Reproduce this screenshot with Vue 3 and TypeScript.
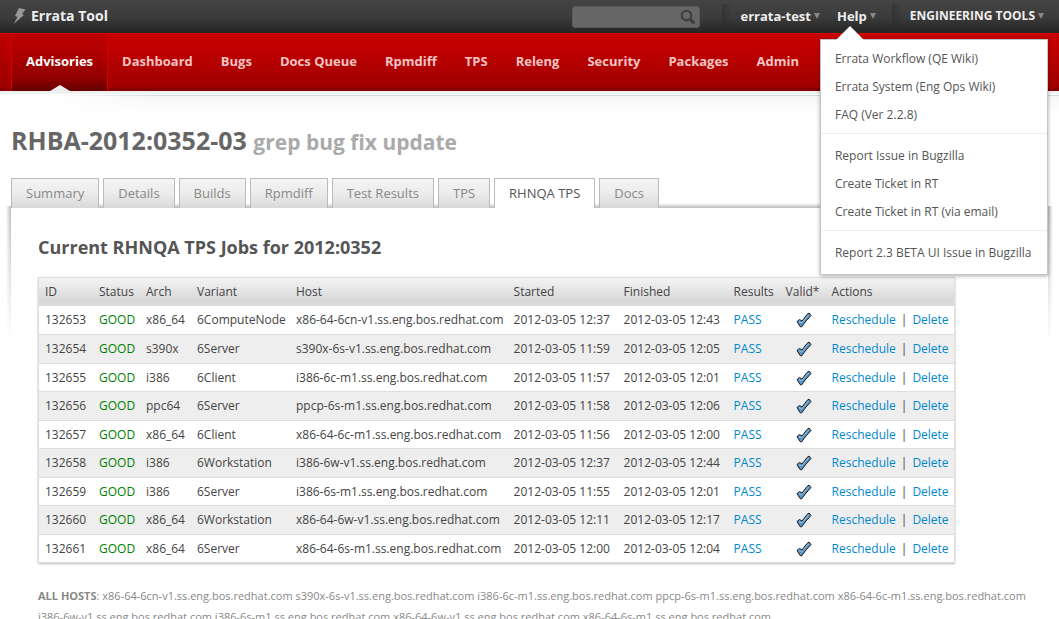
<script setup lang="ts">
import { ref } from 'vue'

interface Job {
  id: number
  arch: string
  variant: string
  host: string
  started: string
  finished: string
}

const navItems: string[] = ['Advisories', 'Dashboard', 'Bugs', 'Docs Queue', 'Rpmdiff', 'TPS', 'Releng', 'Security', 'Packages', 'Admin']
const tabs: string[] = ['Summary', 'Details', 'Builds', 'Rpmdiff', 'Test Results', 'TPS', 'RHNQA TPS', 'Docs']
const helpGroups: string[][] = [
  ['Errata Workflow (QE Wiki)', 'Errata System (Eng Ops Wiki)', 'FAQ (Ver 2.2.8)'],
  ['Report Issue in Bugzilla', 'Create Ticket in RT', 'Create Ticket in RT (via email)'],
  ['Report 2.3 BETA UI Issue in Bugzilla'],
]
const columns: string[] = ['ID', 'Status', 'Arch', 'Variant', 'Host', 'Started', 'Finished', 'Results', 'Valid*', 'Actions']

const domain = '.ss.eng.bos.redhat.com'
const day = '2012-03-05 '
const jobs: Job[] = [
  { id: 132653, arch: 'x86_64', variant: '6ComputeNode', host: 'x86-64-6cn-v1', started: '12:37', finished: '12:43' },
  { id: 132654, arch: 's390x', variant: '6Server', host: 's390x-6s-v1', started: '11:59', finished: '12:05' },
  { id: 132655, arch: 'i386', variant: '6Client', host: 'i386-6c-m1', started: '11:57', finished: '12:01' },
  { id: 132656, arch: 'ppc64', variant: '6Server', host: 'ppcp-6s-m1', started: '11:58', finished: '12:06' },
  { id: 132657, arch: 'x86_64', variant: '6Client', host: 'x86-64-6c-m1', started: '11:56', finished: '12:00' },
  { id: 132658, arch: 'i386', variant: '6Workstation', host: 'i386-6w-v1', started: '12:37', finished: '12:44' },
  { id: 132659, arch: 'i386', variant: '6Server', host: 'i386-6s-m1', started: '11:55', finished: '12:01' },
  { id: 132660, arch: 'x86_64', variant: '6Workstation', host: 'x86-64-6w-v1', started: '12:11', finished: '12:17' },
  { id: 132661, arch: 'x86_64', variant: '6Server', host: 'x86-64-6s-m1', started: '12:00', finished: '12:04' },
]

const query = ref('')
const helpOpen = ref(true)
const activeTab = ref('RHNQA TPS')
</script>

<template>
  <div class="app">
    <header class="topbar">
      <a class="brand" href="#">
        <svg class="bolt" viewBox="0 0 14 18" aria-hidden="true"><path d="M6 1 12.500 2.500 9 7 11 8 0.500 17 4.500 10 2 9Z" /></svg>
        Errata Tool
      </a>
      <form class="search" role="search" @submit.prevent>
        <input v-model="query" type="text" aria-label="Search" />
        <button type="submit" aria-label="Search">
          <svg viewBox="0 0 16 16" aria-hidden="true"><circle cx="6.500" cy="6.500" r="4.800" /><path d="m10.500 10.500 3 3" /></svg>
        </button>
      </form>
      <div class="menus">
        <button class="menu user" type="button">errata-test<span class="caret"></span></button>
        <div class="help">
          <button class="menu" type="button" :aria-expanded="helpOpen" @click="helpOpen = !helpOpen">Help<span class="caret"></span></button>
          <div v-if="helpOpen" class="dropdown">
            <ul v-for="(group, i) in helpGroups" :key="i">
              <li v-for="item in group" :key="item"><a href="#">{{ item }}</a></li>
            </ul>
          </div>
        </div>
        <button class="menu tools" type="button">ENGINEERING TOOLS<span class="caret"></span></button>
      </div>
    </header>

    <nav class="nav" aria-label="Main">
      <a v-for="(item, i) in navItems" :key="item" href="#" :class="{ current: i === 0 }">{{ item }}</a>
    </nav>
    <div class="nav-shade"></div>

    <main>
      <h1>RHBA-2012:0352-03 <small>grep bug fix update</small></h1>
      <div class="tabs" role="tablist">
        <button v-for="tab in tabs" :key="tab" type="button" role="tab" :aria-selected="tab === activeTab" :class="{ active: tab === activeTab }" @click="activeTab = tab">{{ tab }}</button>
      </div>
      <section class="panel">
        <h2>Current RHNQA TPS Jobs for 2012:0352</h2>
        <table>
          <thead>
            <tr><th v-for="(col, i) in columns" :key="col" scope="col" :class="'c' + i">{{ col }}</th></tr>
          </thead>
          <tbody>
            <tr v-for="job in jobs" :key="job.id">
              <td>{{ job.id }}</td>
              <td class="good">GOOD</td>
              <td>{{ job.arch }}</td>
              <td>{{ job.variant }}</td>
              <td>{{ job.host + domain }}</td>
              <td>{{ day + job.started }}</td>
              <td>{{ day + job.finished }}</td>
              <td><a href="#">PASS</a></td>
              <td class="valid">
                <svg viewBox="0 0 16 16" role="img" aria-label="Valid">
                  <path class="edge" d="M1 9.500 3.500 7.500 6 9 11 2.500 13 1 15 3.500 10 9 5.500 15 4 14.500Z" />
                  <path class="shine" d="M3 9.500 5.500 11 12.500 3" />
                </svg>
              </td>
              <td><div class="actions"><a href="#">Reschedule</a><span>|</span><a href="#">Delete</a></div></td>
            </tr>
          </tbody>
        </table>
        <p class="hosts"><strong>ALL HOSTS</strong>: <template v-for="job in jobs" :key="job.id"><span>{{ job.host + domain }}</span>{{ ' ' }}</template></p>
      </section>
    </main>
  </div>
</template>

<style>
html {
  scrollbar-width: none;
}
body {
  background: #fff;
}
</style>

<style scoped>
.app {
  min-height: 100vh;
  font-family: "Open Sans", "Noto Sans", sans-serif;
  font-size: 12px;
  line-height: 16px;
  color: #444;
}
a {
  color: #0088ce;
  text-decoration: none;
}
button {
  font: inherit;
  border: 0;
  padding: 0;
  cursor: pointer;
}
.topbar {
  display: flex;
  align-items: center;
  height: 33px;
  padding: 0 15px 0 13px;
  background: linear-gradient(#444, #3c3c3c 50%, #252525);
}
.brand {
  display: flex;
  align-items: center;
  gap: 4px;
  margin-right: auto;
  padding-bottom: 2px;
  color: #eee;
  font-size: 14px;
  font-weight: 700;
}
.bolt {
  width: 14px;
  height: 18px;
  fill: #999;
}
.search {
  display: flex;
  align-items: center;
  box-sizing: border-box;
  width: 128px;
  height: 22px;
  border-radius: 3px;
  border: 1px solid #5a5a5a;
  background: #666;
}
.search input {
  flex: 1;
  min-width: 0;
  padding: 0 4px;
  border: 0;
  outline: 0;
  background: none;
  color: #eee;
  font: inherit;
}
.search button {
  width: 16px;
  height: 16px;
  margin-right: 3px;
  background: none;
}
.search svg {
  display: block;
  fill: none;
  stroke: #3c3c3c;
  stroke-width: 2;
  stroke-linecap: round;
}
.search path {
  stroke-width: 3;
}
.menus {
  display: flex;
  align-items: center;
  margin-left: 22px;
}
.menu {
  display: flex;
  align-items: center;
  gap: 3px;
  height: 26px;
  padding-bottom: 2px;
  background: none;
  color: #eee;
  font-size: 13px;
  font-weight: 700;
}
.user,
.tools {
  padding-left: 18px;
  background: linear-gradient(90deg, #2a2a2a80, transparent 10px);
}
.tools {
  font-size: 12px;
}
.help {
  position: relative;
  margin: 0 16px 0 17px;
}
.caret {
  border: 3px solid transparent;
  border-top: 6px solid #888;
  border-bottom: 0;
}
.dropdown {
  position: absolute;
  z-index: 2;
  top: 35px;
  left: -17px;
  width: 226px;
  border: 1px solid #c4c4c4;
  background: #fff;
  box-shadow: 0 1px 4px #0005;
}
.dropdown::before {
  content: "";
  position: absolute;
  left: 15px;
  top: -14px;
  border: 14px solid transparent;
  border-top: 0;
  border-bottom-color: #fff;
}
.dropdown ul {
  margin: 0;
  padding: 8px 14px 4px;
  list-style: none;
}
.dropdown ul:first-child {
  padding-top: 5px;
}
.dropdown ul:last-child {
  padding-bottom: 7px;
}
.dropdown ul + ul {
  border-top: 1px solid #eee;
}
.dropdown a {
  display: block;
  color: #555;
  line-height: 28px;
}
.nav {
  display: flex;
  box-sizing: border-box;
  height: 58px;
  padding-left: 11px;
  border-top: 1px solid #e00000;
  background: linear-gradient(90deg, #8003, transparent 24px), linear-gradient(#c80000, #c00000 25%, #a00000 93%, #860000 96%);
}
.nav a {
  padding: 0 14px;
  color: #f5c4c4;
  font-size: 13px;
  font-weight: 700;
  line-height: 54px;
}
.nav a.current {
  position: relative;
  border: solid #d40000;
  border-width: 0 1px;
  background: linear-gradient(#c00000, #a80000 45%, #900000 80%, #600000);
  color: #fff;
}
.nav a.current::after {
  content: "";
  position: absolute;
  left: 50%;
  bottom: 0;
  margin-left: -10px;
  border: 10px solid transparent;
  border-top: 0;
  border-bottom: 6px solid #eee;
}
.nav-shade {
  height: 29px;
  background:
    linear-gradient(90deg, #fff 50px, #fff0 160px) 0 4px no-repeat,
    linear-gradient(#eee, #f2f2f2 3px, #fff 3px, #fff 4px, #d8d8d8 4px, #d8d8d8 5px, #f6f6f6 5px, #fff 24px);
}
main {
  padding: 0 11px;
}
h1 {
  margin: 0;
  color: #666;
  font-size: 25px;
  line-height: 40px;
}
h1 small {
  color: #aaa;
  font-size: 21px;
}
.tabs {
  display: flex;
  gap: 4px;
  margin-top: 16px;
}
.tabs button {
  height: 30px;
  padding: 0 14px 2px;
  border: 1px solid #bbb;
  border-bottom: 0;
  background: linear-gradient(#f4f4f4, #ececec 50%, #d8d8d8);
  color: #888;
  font-size: 13px;
}
.tabs button.active {
  background: #fff;
  color: #555;
}
.panel {
  position: relative;
  padding: 27px 16px 0 27px;
  background: #fff;
}
.panel::before {
  content: "";
  position: absolute;
  z-index: -1;
  top: -5px;
  left: -5px;
  right: -5px;
  height: 140px;
  background:
    linear-gradient(transparent, #0004) 50% 0 / calc(100% - 10px) 5px no-repeat,
    linear-gradient(270deg, #0004, transparent) 0 3px / 5px 100% no-repeat,
    linear-gradient(90deg, #0004, transparent) 100% 3px / 5px 100% no-repeat;
  mask-image: linear-gradient(#000 6px, transparent);
}
h2 {
  margin: 0;
  color: #555;
  font-size: 18px;
  line-height: 25px;
}
table {
  margin-top: 17px;
  border-collapse: separate;
  border-spacing: 0;
  border: 1px solid #ddd;
  box-shadow: 0 1px 2px #0004;
  white-space: nowrap;
}
th,
td {
  padding: 0 4px 0 6px;
  text-align: left;
  font-weight: 400;
}
thead tr {
  height: 28px;
  background: linear-gradient(#f4f4f4, #d8d8d8 80%, #dcdcdc);
}
tbody tr {
  height: 28px;
}
tbody tr:nth-child(even) {
  height: 29px;
  background: #eee;
}
tbody tr + tr td {
  border-top: 1px solid #ddd;
}
.c0 { width: 44px; }
.c1 { width: 37px; }
.c2 { width: 41px; }
.c3 { width: 89px; }
.c4 { width: 207px; }
.c5 { width: 100px; }
.c6 { width: 100px; }
.c7 { width: 42px; }
.c8 { width: 36px; }
.c9 { width: 118px; }
.good {
  color: #008000;
}
.valid svg {
  display: block;
  width: 16px;
  height: 16px;
  margin: 0 auto;
  stroke-linejoin: round;
}
.edge {
  fill: #5b94c4;
  stroke: #1c1c1c;
}
.shine {
  fill: none;
  stroke: #8fc0e6;
}
.actions {
  display: flex;
  gap: 5px;
}
.hosts {
  margin: 22px 0 0;
  color: #888;
  font-size: 11px;
  line-height: 21px;
}
.hosts span {
  white-space: nowrap;
}
</style>
